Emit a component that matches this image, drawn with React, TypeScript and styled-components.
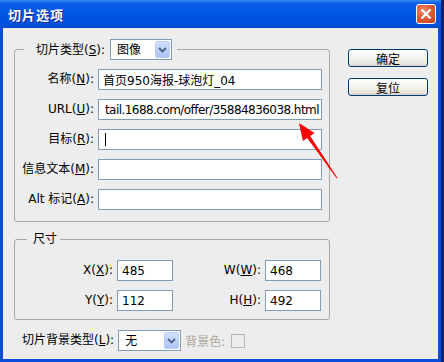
import React from 'react';
import styled, { createGlobalStyle } from 'styled-components';

const GlobalStyle = createGlobalStyle`
  html, body {
    margin: 0;
    padding: 0;
  }
  body {
    font-family: "DejaVu Sans", "Noto Sans CJK SC", sans-serif;
    font-size: 12px;
    color: #000;
  }
`;

const Screen = styled.div`
  position: relative;
  width: 444px;
  height: 362px;
  background: #0b2270;
  overflow: hidden;
`;

const Window = styled.div`
  width: 441px;
  height: 362px;
  display: flex;
  flex-direction: column;
`;

const TitleBar = styled.div`
  height: 28px;
  flex: none;
  display: flex;
  align-items: center;
  justify-content: space-between;
  padding: 0 5px 0 8px;
  box-sizing: border-box;
  background: linear-gradient(
    to bottom,
    #3a8cf5 0%,
    #0b5ee9 12%,
    #0056e6 45%,
    #0052e0 85%,
    #0046cc 100%
  );
`;

const Title = styled.span`
  color: #fff;
  font-family: "Noto Sans CJK SC", sans-serif;
  font-weight: bold;
  font-size: 13px;
  letter-spacing: 1px;
  text-shadow: 1px 1px 0 #0a2a8c;
`;

const CloseButton = styled.div`
  width: 20px;
  height: 20px;
  box-sizing: border-box;
  border: 1px solid #fff;
  border-radius: 3px;
  background: radial-gradient(circle at 35% 30%, #f08a68 0%, #e05a34 45%, #c8401c 100%);
  display: flex;
  align-items: center;
  justify-content: center;
`;

const Frame = styled.div`
  flex: 1;
  display: flex;
  gap: 18px;
  padding: 11px 0 0 11px;
  background: #ededed;
  border: 3px solid #0a4ddb;
  border-top: 0;
`;

const LeftColumn = styled.div`
  width: 316px;
  display: flex;
  flex-direction: column;
`;

const Group = styled.fieldset<{ $top: number; $bottom: number; $gapAbove?: number }>`
  margin: ${(p) => p.$gapAbove ?? 0}px 0 0 0;
  padding: ${(p) => p.$top}px 7px ${(p) => p.$bottom}px 0;
  border: 1px solid #a8a7a2;
  border-radius: 3px;
  min-width: 0;
`;

const Legend = styled.legend<{ $offset: number; $padLeft: number; $padRight: number }>`
  margin-left: ${(p) => p.$offset}px;
  padding: 0 ${(p) => p.$padRight}px 0 ${(p) => p.$padLeft}px;
  display: flex;
  align-items: center;
  gap: 5px;
  line-height: 16px;
`;

const FieldGrid = styled.div`
  display: grid;
  grid-template-columns: 79px 224px;
  column-gap: 4px;
  row-gap: 9px;
`;

const SizeGrid = styled.div`
  display: grid;
  grid-template-columns: 98px 56px 84px 56px;
  column-gap: 4px;
  row-gap: 9px;
`;

const Label = styled.span`
  text-align: right;
  white-space: nowrap;
  line-height: 21px;
`;

const TextBox = styled.div<{ $tight?: boolean }>`
  height: 21px;
  box-sizing: border-box;
  border: 1px solid #7f9db9;
  background: #fff;
  padding: 0 ${(p) => (p.$tight ? 2 : 4)}px;
  display: flex;
  align-items: center;
  justify-content: ${(p) => (p.$tight ? 'flex-end' : 'flex-start')};
  letter-spacing: ${(p) => (p.$tight ? '-0.55px' : 'normal')};
  overflow: hidden;
  white-space: nowrap;
`;

const Caret = styled.span`
  width: 1px;
  height: 13px;
  margin-left: 2px;
  background: #000;
`;

const Select = styled.div<{ $width: number }>`
  width: ${(p) => p.$width}px;
  height: 21px;
  box-sizing: border-box;
  border: 1px solid #7f9db9;
  background: #fff;
  display: flex;
  align-items: center;
  justify-content: space-between;
  padding: 0 1px 0 6px;
  line-height: 16px;
  flex: none;
`;

const DropButton = styled.span`
  width: 15px;
  height: 17px;
  border-radius: 2px;
  border: 1px solid #b9cdf6;
  box-sizing: border-box;
  background: linear-gradient(to bottom, #d2e0fd 0%, #bcd0fa 55%, #adc4f6 100%);
  display: flex;
  align-items: center;
  justify-content: center;
`;

const BottomRow = styled.div`
  display: flex;
  align-items: center;
  margin-top: 10px;
  padding-left: 8px;
`;

const DisabledText = styled.span`
  color: #aca899;
  margin-left: 4px;
  white-space: nowrap;
`;

const CheckBox = styled.span`
  width: 14px;
  height: 14px;
  box-sizing: border-box;
  border: 1px solid #b8b6ad;
  margin-left: 6px;
`;

const RightColumn = styled.div`
  display: flex;
  flex-direction: column;
  gap: 11px;
  margin-top: 10px;
`;

const Button = styled.div`
  width: 80px;
  height: 18px;
  box-sizing: border-box;
  border: 1px solid #003c74;
  border-radius: 3px;
  background: linear-gradient(to bottom, #ffffff 0%, #f4f3ee 50%, #e6e4dc 85%, #d6d0c5 100%);
  display: flex;
  align-items: center;
  justify-content: center;
  font-family: "Noto Sans CJK SC", sans-serif;
  font-size: 12px;
`;

const Arrow = styled.svg`
  position: absolute;
  left: 0;
  top: 0;
  pointer-events: none;
`;

const Key = ({ k }: { k: string }) => (
  <>
    (<u>{k}</u>):
  </>
);

const Chevron = () => (
  <svg width="9" height="6" viewBox="0 0 9 6">
    <path d="M1 1 L4.5 4.5 L8 1" fill="none" stroke="#4d6185" strokeWidth="1.8" />
  </svg>
);

const fields = [
  { name: '名称', key: 'N', value: '首页950海报-球泡灯_04' },
  { name: 'URL', key: 'U', value: 'tail.1688.com/offer/35884836038.html', tight: true },
  { name: '目标', key: 'R', value: '', caret: true },
  { name: '信息文本', key: 'M', value: '' },
  { name: 'Alt 标记', key: 'A', value: '' },
];

const App = () => {
  return (
    <Screen>
      <GlobalStyle />
      <Window>
        <TitleBar>
          <Title>切片选项</Title>
          <CloseButton>
            <svg width="12" height="12" viewBox="0 0 12 12">
              <path d="M1.5 1.5 L10.5 10.5 M10.5 1.5 L1.5 10.5" stroke="#fff" strokeWidth="2.4" />
            </svg>
          </CloseButton>
        </TitleBar>

        <Frame>
          <LeftColumn>
            <Group $top={9} $bottom={11}>
              <Legend $offset={9} $padLeft={12} $padRight={5}>
                <span>
                  切片类型<Key k="S" />
                </span>
                <Select $width={62}>
                  <span>图像</span>
                  <DropButton>
                    <Chevron />
                  </DropButton>
                </Select>
              </Legend>
              <FieldGrid>
                {fields.map((f) => (
                  <React.Fragment key={f.key}>
                    <Label>
                      {f.name}
                      <Key k={f.key} />
                    </Label>
                    <TextBox $tight={f.tight}>
                      {f.value}
                      {f.caret && <Caret />}
                    </TextBox>
                  </React.Fragment>
                ))}
              </FieldGrid>
            </Group>

            <Group $top={13} $bottom={8} $gapAbove={9}>
              <Legend $offset={12} $padLeft={6} $padRight={3}>
                尺寸
              </Legend>
              <SizeGrid>
                <Label>
                  X<Key k="X" />
                </Label>
                <TextBox>485</TextBox>
                <Label>
                  W<Key k="W" />
                </Label>
                <TextBox>468</TextBox>
                <Label>
                  Y<Key k="Y" />
                </Label>
                <TextBox>112</TextBox>
                <Label>
                  H<Key k="H" />
                </Label>
                <TextBox>492</TextBox>
              </SizeGrid>
            </Group>

            <BottomRow>
              <Label>
                切片背景类型<Key k="L" />
              </Label>
              <Select $width={63} style={{ marginLeft: 4 }}>
                <span>无</span>
                <DropButton>
                  <Chevron />
                </DropButton>
              </Select>
              <DisabledText>背景色:</DisabledText>
              <CheckBox />
            </BottomRow>
          </LeftColumn>

          <RightColumn>
            <Button>确定</Button>
            <Button>复位</Button>
          </RightColumn>
        </Frame>
      </Window>

      <Arrow width="444" height="362" viewBox="0 0 444 362">
        <polygon
          points="299,123 314.5,133 310.2,136 337.4,177.7 336.6,178.3 307.2,138 302.9,141"
          fill="#ff0000"
        />
      </Arrow>
    </Screen>
  );
};

export default App;
